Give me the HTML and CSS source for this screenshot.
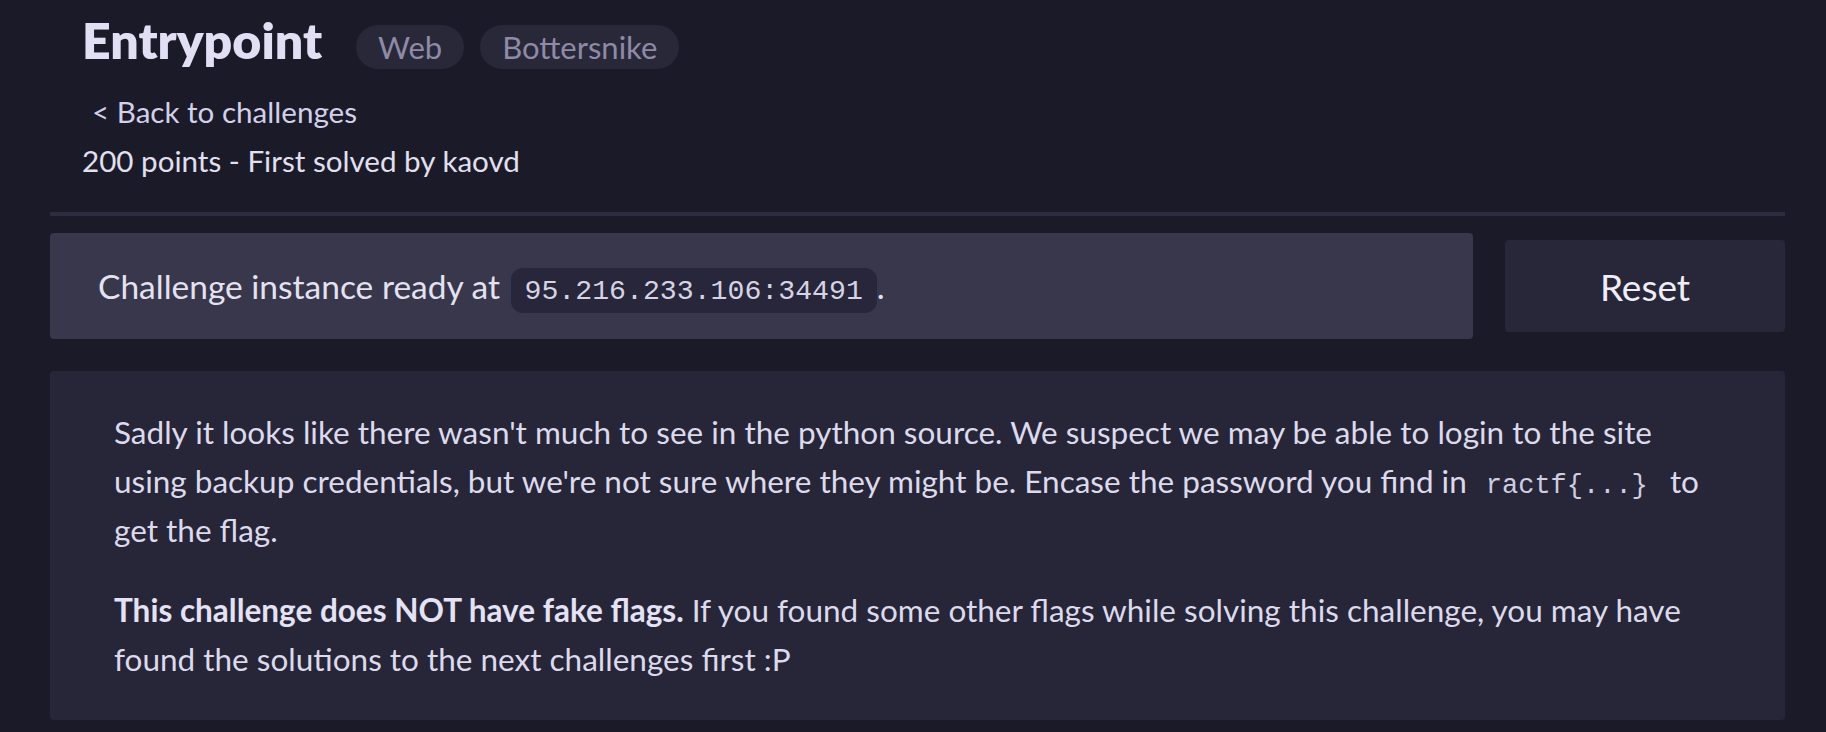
FILE: index.html
```html
<!DOCTYPE html>
<html lang="en">
<head>
<meta charset="utf-8">
<title>Entrypoint</title>
<link rel="stylesheet" href="styles.css">
</head>
<body>
<main class="page">
  <header class="head">
    <div class="title-row">
      <h1 class="title">Entrypoint</h1>
      <div class="tags">
        <span class="tag">Web</span>
        <span class="tag">Bottersnike</span>
      </div>
    </div>
    <a class="back" href="#">&lt; Back to challenges</a>
    <div class="points">200 points - First solved by kaovd</div>
  </header>
  <div class="rule"></div>
  <section class="instance-row">
    <div class="instance">
      <span>Challenge instance ready at <code class="addr">95.216.233.106:34491</code>.</span>
    </div>
    <button class="reset" type="button">Reset</button>
  </section>
  <section class="desc">
    <p>Sadly it looks like there wasn't much to see in the python source. We suspect we may be able to login to the site using backup credentials, but we're not sure where they might be. Encase the password you find in <code class="inline">ractf{...}</code> to get the flag.</p>
    <p><strong>This challenge does NOT have fake flags.</strong> If you found some other flags while solving this challenge, you may have found the solutions to the next challenges first :P</p>
  </section>
</main>
</body>
</html>
```
FILE: styles.css
```css
html, body {
  margin: 0;
  padding: 0;
  background: #1b1a29;
}

body {
  font-family: Lato, "Noto Sans", sans-serif;
  color: #dedcef;
}

.page {
  padding: 10px 41px 0 50px;
}

.head {
  padding-left: 32px;
}

.title-row {
  display: flex;
  align-items: baseline;
  gap: 34px;
}

.title {
  margin: 0;
  font-size: 50px;
  line-height: 60px;
  font-weight: 800;
  color: #e2dff4;
}

.tags {
  display: flex;
  align-items: baseline;
  gap: 16px;
}

.tag {
  display: inline-block;
  background: #292839;
  color: #8e8aa7;
  font-size: 31px;
  line-height: 36px;
  padding: 4px 22px;
  border-radius: 22px;
}

.back {
  display: block;
  margin-top: 25px;
  margin-left: 10px;
  font-size: 29.6px;
  line-height: 34px;
  color: #d3d0ea;
  text-decoration: none;
}

.points {
  margin-top: 15px;
  font-size: 29.6px;
  line-height: 34px;
  color: #e2e0f0;
}

.rule {
  margin-top: 34px;
  height: 4px;
  background: #2d2c40;
}

.instance-row {
  margin-top: 17px;
  display: flex;
  align-items: center;
  gap: 32px;
}

.instance {
  flex: 1;
  height: 106px;
  box-sizing: border-box;
  padding-left: 48px;
  display: flex;
  align-items: center;
  background: #38374c;
  border-radius: 4px;
  font-size: 33.5px;
  color: #e4e2f0;
}

.addr {
  font-family: "Liberation Mono", "DejaVu Sans Mono", monospace;
  font-size: 28.2px;
  line-height: 1;
  background: #27263a;
  color: #d6d4e4;
  padding: 8px 14px 6px;
  border-radius: 12px;
  margin-left: 2px;
}

.reset {
  width: 280px;
  height: 92px;
  border: 0;
  border-radius: 4px;
  background: #282739;
  color: #efedf8;
  font-family: Lato, "Noto Sans", sans-serif;
  font-size: 37px;
  cursor: pointer;
}

.desc {
  margin-top: 32px;
  background: #272638;
  border-radius: 4px;
  padding: 37px 64px 36px;
  font-size: 31.5px;
  line-height: 49px;
  color: #dcdaec;
}

.desc p {
  margin: 0;
}

.desc p + p {
  margin-top: 31px;
}

.desc strong {
  font-weight: 700;
  color: #e4e2f4;
}

.inline {
  font-family: "Liberation Mono", "DejaVu Sans Mono", monospace;
  font-size: 27px;
  line-height: 1;
  padding: 0 14px 0 11px;
  color: #cfcde0;
}
```
